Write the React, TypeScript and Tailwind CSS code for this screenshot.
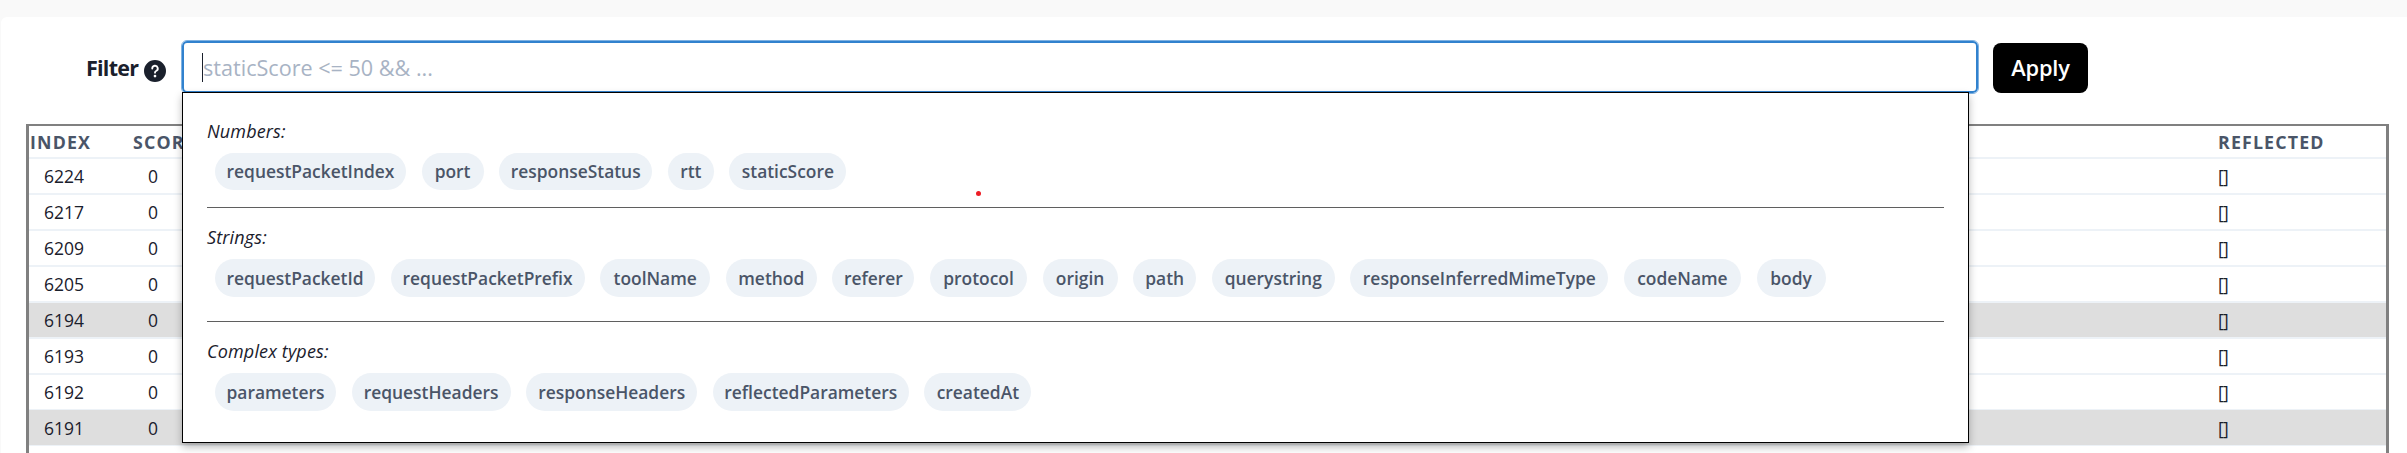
type Chip = { label: string; width: string };
type Row = { index: string; shaded?: boolean; box: string };

const numbers: Chip[] = [
  { label: "requestPacketIndex", width: "w-[191px]" },
  { label: "port", width: "w-[62px]" },
  { label: "responseStatus", width: "w-[153px]" },
  { label: "rtt", width: "w-[46px]" },
  { label: "staticScore", width: "w-[117px]" },
];

const strings: Chip[] = [
  { label: "requestPacketId", width: "w-[160px]" },
  { label: "requestPacketPrefix", width: "w-[194px]" },
  { label: "toolName", width: "w-[110px]" },
  { label: "method", width: "w-[91px]" },
  { label: "referer", width: "w-[82px]" },
  { label: "protocol", width: "w-[97px]" },
  { label: "origin", width: "w-[75px]" },
  { label: "path", width: "w-[63px]" },
  { label: "querystring", width: "w-[123px]" },
  { label: "responseInferredMimeType", width: "w-[258px]" },
  { label: "codeName", width: "w-[117px]" },
  { label: "body", width: "w-[69px]" },
];

const complexTypes: Chip[] = [
  { label: "parameters", width: "w-[121px]" },
  { label: "requestHeaders", width: "w-[159px]" },
  { label: "responseHeaders", width: "w-[171px]" },
  { label: "reflectedParameters", width: "w-[196px]" },
  { label: "createdAt", width: "w-[107px]" },
];

const rows: Row[] = [
  { index: "6224", box: "h-9 border-b-2" },
  { index: "6217", box: "h-9 border-b-2" },
  { index: "6209", box: "h-9 border-b-2" },
  { index: "6205", box: "h-9 border-b-2" },
  { index: "6194", box: "h-9 border-b-2", shaded: true },
  { index: "6193", box: "h-9 border-b-2" },
  { index: "6192", box: "h-[35px] border-b" },
  { index: "6191", box: "h-9 border-b pt-px", shaded: true },
];

function QuestionIcon() {
  return (
    <svg viewBox="0 0 24 24" className="mt-1 ml-[7px] size-[22px] shrink-0" fill="#1a202c">
      <path d="M12,0A12,12,0,1,0,24,12,12.013,12.013,0,0,0,12,0Zm0,19a1.5,1.5,0,1,1,1.5-1.5A1.5,1.5,0,0,1,12,19Zm1.6-6.08a1,1,0,0,0-.6.917,1,1,0,1,1-2,0,3,3,0,0,1,1.8-2.75A2,2,0,1,0,10,9.255a1,1,0,1,1-2,0,4,4,0,1,1,5.6,3.666Z" />
    </svg>
  );
}

function ChipGroup({ title, chips, box }: { title: string; chips: Chip[]; box: string }) {
  return (
    <section>
      <h3 className="h-[27px] text-[18px] leading-[27px] tracking-[0.15px] italic">{title}</h3>
      <ul className="mt-2 ml-2 flex gap-[15.6px]">
        {chips.map((chip) => (
          <li
            key={chip.label}
            className={`flex shrink-0 items-center justify-center rounded-full bg-[#edf2f7] text-[17.4px] font-semibold whitespace-nowrap text-[#4a5568] ${box} ${chip.width}`}
          >
            {chip.label}
          </li>
        ))}
      </ul>
    </section>
  );
}

function Suggestions() {
  return (
    <div className="absolute top-[52px] left-px z-10 h-[351px] w-[1787px] border border-black bg-white px-6 pt-[25px] shadow-[0_4px_8px_rgba(0,0,0,0.28)]">
      <ChipGroup title="Numbers:" chips={numbers} box="h-[37px] pb-px" />
      <hr className="mt-[17px] mb-[16px] border-t border-[#5f5f5f]" />
      <ChipGroup title="Strings:" chips={strings} box="h-[38px] pt-px" />
      <hr className="mt-[24px] mb-[16px] border-t border-[#5f5f5f]" />
      <ChipGroup title="Complex types:" chips={complexTypes} box="h-[38px] pt-px" />
      <span className="absolute top-[98px] left-[793px] size-[5px] rounded-full bg-[#ed1c24]" />
    </div>
  );
}

export default function App() {
  return (
    <div className="h-[453px] w-full overflow-hidden bg-[#f9f9f9] pt-[17px] pl-px font-['Open_Sans',sans-serif] text-[#1a202c]">
      <main className="flex h-[436px] flex-col rounded-tl-md bg-white">
        <div className="flex h-[107px] shrink-0 items-start pt-[23px] pl-[85px]">
          <div className="flex h-[54px] w-[95px] shrink-0 items-center pt-[3px]">
            <span className="w-[51px] text-[21.5px] font-bold tracking-[-0.75px] whitespace-nowrap">Filter</span>
            <QuestionIcon />
          </div>
          <div className="relative h-[54px] w-[1798px] shrink-0">
            <div className="flex h-full items-center rounded-md border border-[#7fb2e2] bg-white pl-5 shadow-[inset_0_0_0_2px_#3182ce]">
              <span className="h-[29px] w-px bg-[#1a202c]" />
              <span className="pt-[3px] text-[21.6px] whitespace-nowrap text-[#a8b3c4]">staticScore &lt;= 50 &amp;&amp; ...</span>
            </div>
            <Suggestions />
          </div>
          <button className="mt-[3px] ml-[14px] h-[50px] w-[95px] rounded-lg bg-black pt-px text-[21.8px] font-semibold tracking-[-0.2px] text-white">
            Apply
          </button>
        </div>
        <div className="mr-[18px] ml-[25px] h-[400px] shrink-0 border-x-3 border-t-2 border-[#808080]">
          <div className="flex h-[33px] items-center border-b-2 border-[#edf2f7] pt-0.5 pl-px text-[17.8px] font-bold tracking-[1.15px] text-[#4a5568]">
            <span className="w-[103px]">INDEX</span>
            <span className="w-[2085px]">SCORE</span>
            <span>REFLECTED</span>
          </div>
          {rows.map((row) => (
            <div
              key={row.index}
              className={`flex items-center border-[#edf2f7] text-[17.5px] ${row.box} ${row.shaded ? "bg-[#dedede]" : "bg-white"}`}
            >
              <span className="w-[119px] pl-[15px]">{row.index}</span>
              <span className="w-[2070px]">0</span>
              <span className="tracking-[-0.8px]">[]</span>
            </div>
          ))}
        </div>
      </main>
    </div>
  );
}
